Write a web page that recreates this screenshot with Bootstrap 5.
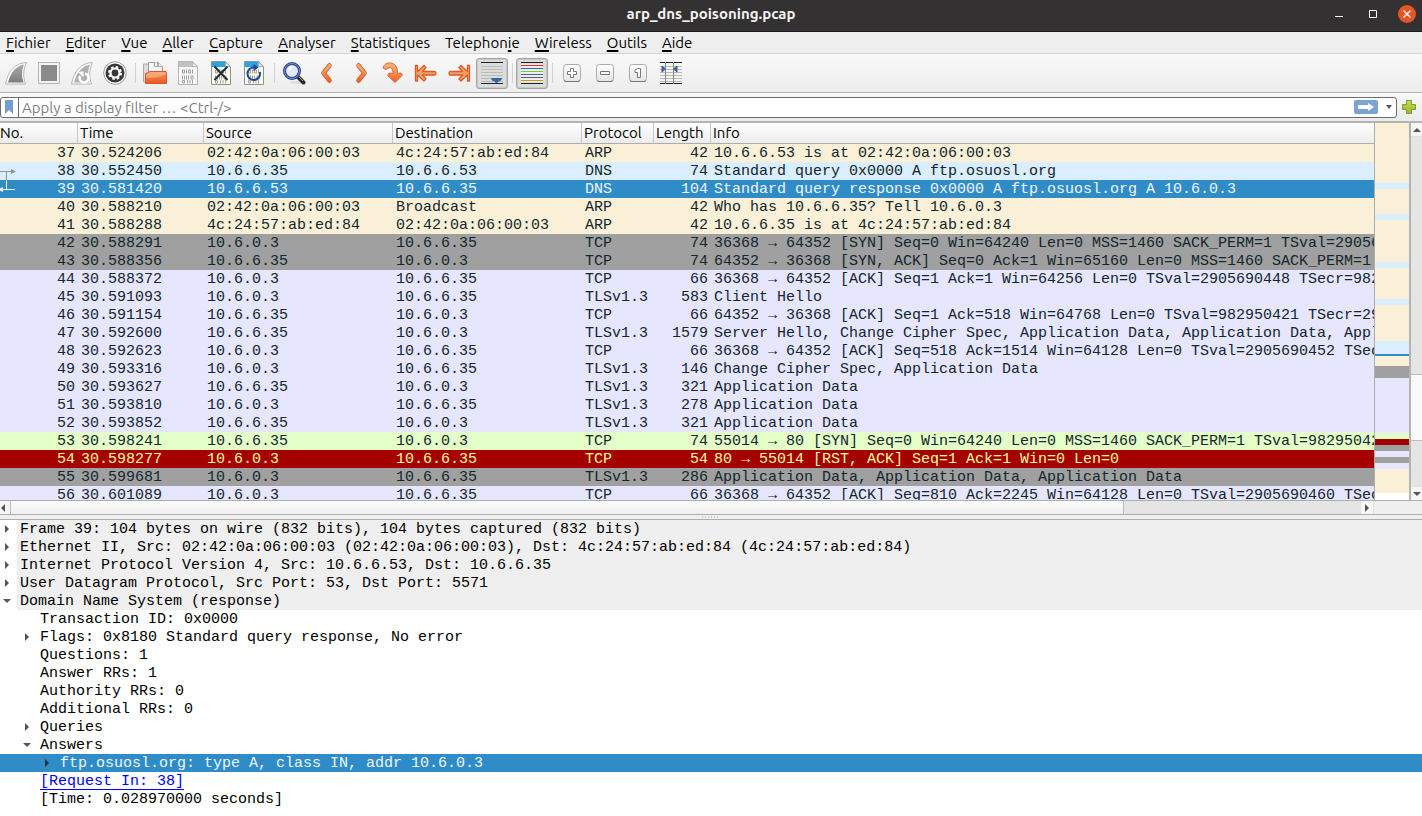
<!DOCTYPE html>
<html lang="fr">
<head>
<meta charset="utf-8">
<meta name="viewport" content="width=device-width, initial-scale=1">
<title>arp_dns_poisoning.pcap</title>
<link href="https://cdn.jsdelivr.net/npm/bootstrap@5.3.0/dist/css/bootstrap.min.css" rel="stylesheet">
<script src="https://cdn.jsdelivr.net/npm/bootstrap@5.3.0/dist/js/bootstrap.bundle.min.js"></script>
<style>
body{font-family:Ubuntu,"Open Sans","Noto Sans",sans-serif;font-size:15px;line-height:20px;color:#000;background:#efefef}
.titlebar{height:32px;background:#333132;border-bottom:1px solid #1c1b1b;color:#fff}
.titlebar h1{font-size:15px;line-height:20px;font-weight:700;color:#f4f3f1}
.winbtns{right:6px;top:0;height:27px;gap:16px}
.winbtns button{width:18px;height:18px}
.plain{border:0;background:none;padding:0;display:flex;align-items:center;justify-content:center}
.menubar{height:22px;border-bottom:1px solid #d4d4d4;padding:0 6px;gap:15px;line-height:22px}
.menubar a{color:#000;text-decoration:none}
.menubar u{text-decoration-thickness:2px;text-underline-offset:2px;text-decoration-skip-ink:none}
.toolbar{height:39px;border-bottom:1px solid #b4b4b4;background:linear-gradient(#f9f9f9,#ededed)}
.tool{width:33px;height:31px;flex:none;padding-right:1px}
.tool.on{background:#dcdcdc;border:1px solid #a5a5a5;border-radius:3px;width:32px;margin-right:1px;padding:0;box-shadow:inset 0 0 0 1px #c8c8c8}
.sep{width:7px;height:20px;flex:none;background:linear-gradient(#d2d2d2,#d2d2d2) 3px 0/1px 100% no-repeat}
.filterbar{height:30px;background:linear-gradient(#f8f8f8,#ebebeb);border-bottom:2px solid #b4b4b4;padding:0 6px 0 0;gap:5px}
.filterbox{height:21px;border:1px solid #6b6b6b;border-radius:3px;background:#fff}
.filterbox .mark-btn{width:18px;border-right:1px solid #6b6b6b;align-self:stretch}
.filterbox input{border:0;outline:0;min-width:0;padding:0 3px;font-size:15px;line-height:19px;height:19px;background:none}
.filterbox input::placeholder{color:#808080;opacity:1}
.packets{flex:392 1 0;min-height:0}
.rows{min-width:0;overflow:hidden;background:#fff}
.ptable{table-layout:fixed;width:100%;border-collapse:separate;border-spacing:0;font-family:"Liberation Mono",monospace;font-size:15px;line-height:16px;color:#12272e}
.ptable th{font:400 15px/20px Ubuntu,"Open Sans","Noto Sans",sans-serif;color:#000;height:21px;padding:0 0 0 2px;background:linear-gradient(#fff,#ececec);border-bottom:1px solid #adadad;border-right:1px solid #c8c8c8}
.ptable th:first-child{padding-left:0}
.ptable th:last-child{border-right:0}
.ptable td{padding:2px 0 0 3px;height:18px;white-space:pre;overflow:hidden}
.ptable td:nth-child(1){position:relative;text-align:right;padding-right:3px;padding-left:0}
.ptable td:nth-child(6){text-align:right;padding-right:3px}
.c1{width:78px}.c2{width:126px}.c3,.c4{width:189px}.c5{width:72px}.c6{width:57px}
.arp{background:#faf0d7}.dns{background:#daeeff}.tcp{background:#e7e6ff}.syn{background:#a0a0a0}.web{background:#e4ffc7}
.rst{background:#a40000;color:#fffc9c}.cur{background:#308cc6;color:#eff6fb}.blank{background:#fff}
.minimap{width:37px;flex:none;border-left:1px solid #adadad;border-right:2px solid #b4b4b4;background:#fff}
.vscroll{width:11px;flex:none;background:#e5e5e5}
.vscroll button,.hscroll button{background:#f6f6f6;flex:none}
.vscroll button{height:14px;overflow:hidden}
.vscroll .thumb{height:67px;background:#fafafa;border:1px solid #bdbdbd;border-width:1px 0}
.hscroll{height:15px;flex:none;border-top:1px solid #adadad;border-bottom:1px solid #adadad;background:#efefef}
.hscroll .track{background:#e5e5e5;margin-right:48px}
.hscroll .thumb{background:linear-gradient(#fcfcfc,#f0f0f0);border:1px solid #bdbdbd;border-width:0 1px}
.split{height:5px;flex:none;border-bottom:1px solid #adadad;color:#999}
.tree-pane{flex:296 1 0;min-height:0;overflow:hidden;background:#fff;font-family:"Liberation Mono",monospace;font-size:15px;line-height:16px}
.tree-pane li{display:flex;height:18px;white-space:pre}
.tree-pane .l1{padding-left:20px}
.tree-pane .l2{padding-left:40px}
.tree-pane .l0 span{flex:1;background:#efefef}
.tree-pane span,.tree-pane a{padding:2px 0 0 3px}
.tree-pane .twist{width:17px;height:18px;flex:none;padding-right:3px}
.tree-pane a{color:#00f;margin-left:20px;padding-left:0;text-decoration:none;border-bottom:1px solid #00f}
</style>
</head>
<body class="d-flex flex-column vh-100 overflow-hidden">
<svg class="position-absolute" width="0" height="0" aria-hidden="true">
<defs>
<linearGradient id="or" x1="0" y1="0" x2="0" y2="24" gradientUnits="userSpaceOnUse"><stop offset="0" stop-color="#f3bd88"/><stop offset=".5" stop-color="#f09050"/><stop offset="1" stop-color="#ec4e1c"/></linearGradient>
<linearGradient id="gy" x1="0" y1="0" x2="0" y2="1"><stop offset="0" stop-color="#aaa"/><stop offset="1" stop-color="#7d7d7d"/></linearGradient>
<linearGradient id="kb" x1="0" y1="0" x2="0" y2="1"><stop offset="0" stop-color="#fff"/><stop offset="1" stop-color="#e4e4e4"/></linearGradient>
<linearGradient id="gn" x1="0" y1="0" x2="0" y2="1"><stop offset="0" stop-color="#c8dc5c"/><stop offset="1" stop-color="#94b824"/></linearGradient>
<symbol id="bits" viewBox="0 0 24 24"><g fill="none" stroke="#a0a0a0" stroke-width="1"><path d="M6.500 9h2v3h-2zM12.500 9h2v3h-2zM10.500 8.500v4M16.500 8.500v4M6.500 14.500v4M8.500 14.500v4M10.500 14.500v4M12.500 14.500v4M15 15h2v3h-2zM6.500 19.500h2v2.500h-2zM11.500 19v3.500M14 19v3.500M16.500 19v3.500"/></g></symbol>
<symbol id="right" viewBox="0 0 8 8"><path d="M2 0v8l4-4z" fill="currentColor"/></symbol>
<symbol id="down" viewBox="0 0 8 8"><path d="M0 2h8L4 6z" fill="currentColor"/></symbol>
</defs>
</svg>

<header class="titlebar position-relative d-flex justify-content-center flex-shrink-0 pt-1">
<h1 class="m-0">arp_dns_poisoning.pcap</h1>
<div class="winbtns position-absolute d-flex align-items-center">
<button class="plain" aria-label="Réduire"><svg width="18" height="18"><path d="M5 11.500h8" stroke="#fff"/></svg></button>
<button class="plain" aria-label="Agrandir"><svg width="18" height="18"><path d="M5.500 5.500h7v7h-7z" fill="none" stroke="#fff"/></svg></button>
<button class="plain" aria-label="Fermer"><svg width="18" height="18"><circle cx="9" cy="9" r="9" fill="#e95420"/><path d="M5.500 5.500l7 7m0-7l-7 7" stroke="#fff" stroke-width="1.500"/></svg></button>
</div>
</header>

<nav class="menubar d-flex flex-shrink-0" aria-label="Menu">
<a href="#"><u>F</u>ichier</a><a href="#"><u>E</u>diter</a><a href="#"><u>V</u>ue</a><a href="#"><u>A</u>ller</a><a href="#"><u>C</u>apture</a><a href="#"><u>A</u>nalyser</a><a href="#"><u>S</u>tatistiques</a><a href="#">Telephon<u>i</u>e</a><a href="#"><u>W</u>ireless</a><a href="#"><u>O</u>utils</a><a href="#"><u>A</u>ide</a>
</nav>

<div class="toolbar d-flex align-items-center flex-shrink-0" role="toolbar" aria-label="Outils">
<button class="tool plain" aria-label="Démarrer"><svg width="24" height="24"><path d="M1.500 23C4 10 11 2 22.500 1.500C19 9 19 16 21.500 23Z" fill="#fff" stroke="#b4b4b4"/><path d="M4 21.500C6.500 11.500 12 5 20 3.500C17.500 10 17.500 16 19.500 21.500Z" fill="url(#gy)"/></svg></button>
<button class="tool plain" aria-label="Arrêter"><svg width="24" height="24"><path d="M1.500 1.500h21v21h-21z" fill="#f4f4f4" stroke="#b4b4b4"/><path d="M4 4h16v16H4z" fill="#8a8a8a"/></svg></button>
<button class="tool plain" aria-label="Redémarrer"><svg width="24" height="24"><path d="M1.500 23C4 10 11 2 22.500 1.500C19 9 19 16 21.500 23Z" fill="#fff" stroke="#b4b4b4"/><path d="M4 21.500C6.500 11.500 12 5 20 3.500C17.500 10 17.500 16 19.500 21.500Z" fill="#b0b0b0"/><path d="M15 12.500a4.500 4.500 0 1 1-5 2.500" fill="none" stroke="#fff" stroke-width="2.500"/><path d="M7.500 10.500h6v6z" fill="#fff"/></svg></button>
<button class="tool plain" aria-label="Options"><svg width="24" height="24"><circle cx="12" cy="12" r="11.300" fill="#fff" stroke="#999"/><circle cx="12" cy="12" r="9.500" fill="#383838"/><circle cx="12" cy="12" r="4.500" fill="none" stroke="#fff" stroke-width="2.200"/><circle cx="12" cy="12" r="6" fill="none" stroke="#fff" stroke-width="2" stroke-dasharray="2.500 2.212"/></svg></button>
<span class="sep"></span>
<button class="tool plain" aria-label="Ouvrir"><svg width="24" height="24"><path d="M.500 3h5v18h-5z" fill="#ddd" stroke="#aaa"/><path d="M5.500 1.500h10l4 4V12h-14z" fill="#fafafa" stroke="#999"/><path d="M11.500 1.500v4h3v-4M15.500 1.500v4h4" fill="#fff" stroke="#aaa"/><path d="M2.500 22.500V12.500l3-1 1-1h16.500l.5 1v11z" fill="url(#or)" stroke="#dd5425"/><path d="M3 17c8 0 14-1 20-4v-2H7l-1 1-3 1z" fill="#f7b48a" opacity=".7"/></svg></button>
<button class="tool plain" aria-label="Enregistrer"><svg width="24" height="24"><path d="M2.500.5h14l5 5v18h-19z" fill="#f8f8f8" stroke="#b4b4b4"/><path d="M3 1h13.500v5H3z" fill="#c2c2c2"/><path d="M16.500 1v4.500h4.500z" fill="#fff" stroke="#b4b4b4"/><use href="#bits"/></svg></button>
<button class="tool plain" aria-label="Fermer le fichier"><svg width="24" height="24"><path d="M2.500.5h14l5 5v18h-19z" fill="#fcfcec" stroke="#8d958d"/><path d="M3 1h13.500l4.500 5H3z" fill="#2ba3e2"/><path d="M16.500 1v4.500h4.500z" fill="#fff" stroke="#9ab"/><use href="#bits"/><path d="M5.500 5.500l13 13.500m0-13.500l-13 13.500" stroke="#222f3a" stroke-width="2"/></svg></button>
<button class="tool plain" aria-label="Recharger"><svg width="24" height="24"><path d="M2.500.5h14l5 5v18h-19z" fill="#fcfcec" stroke="#8d958d"/><path d="M3 1h13.500l4.500 5H3z" fill="#2ba3e2"/><path d="M16.500 1v4.500h4.500z" fill="#fff" stroke="#9ab"/><use href="#bits"/><path d="M17.800 11a6.300 6.300 0 1 1-5.300-4.500" fill="none" stroke="#204a94" stroke-width="2"/><path d="M11.500 3l5 3.500-5 3.500z" fill="#204a94"/></svg></button>
<span class="sep"></span>
<button class="tool plain" aria-label="Rechercher"><svg width="24" height="24"><ellipse cx="15" cy="21.500" rx="7" ry="1.500" fill="#ddd"/><path d="M15.500 15.500l6 6" stroke="#2c2c2c" stroke-width="4" stroke-linecap="round"/><path d="M16 15l5 5" stroke="#999"/><circle cx="10" cy="10" r="7.500" fill="#e4ebf7" stroke="#27408f" stroke-width="3"/><circle cx="10" cy="10" r="7.500" fill="none" stroke="#7d93cf" stroke-width="1"/><path d="M6.500 9c.5-2 2-3 4-3" fill="none" stroke="#fff" stroke-width="2"/></svg></button>
<button class="tool plain" aria-label="Précédent"><svg width="24" height="24"><path d="M14.500 4.500L8.500 12l6 7.500" fill="none" stroke="#d95322" stroke-width="4.500" stroke-linecap="round" stroke-linejoin="round"/><path d="M14.500 4.500L8.500 12l6 7.500" fill="none" stroke="url(#or)" stroke-width="3" stroke-linecap="round" stroke-linejoin="round"/></svg></button>
<button class="tool plain" aria-label="Suivant"><svg width="24" height="24"><path d="M10.500 4.500l6 7.500-6 7.500" fill="none" stroke="#d95322" stroke-width="4.500" stroke-linecap="round" stroke-linejoin="round"/><path d="M10.500 4.500l6 7.500-6 7.500" fill="none" stroke="url(#or)" stroke-width="3" stroke-linecap="round" stroke-linejoin="round"/></svg></button>
<button class="tool plain" aria-label="Aller au paquet"><svg width="24" height="24"><path d="M2 7C3 3 6 1.500 9.500 2C14 2.500 16.500 5.500 16.500 12.500l3.500-.5 1.500 2L14 21.500 6.500 14.500 8 12l4 .5C12 8.500 10.500 6 8 6.500L5 8.500z" fill="url(#or)" stroke="#e06a35" stroke-linejoin="round"/></svg></button>
<button class="tool plain" aria-label="Premier paquet"><svg width="24" height="24"><path d="M1.500 4.500h2v6l6.500-6 2 2-3.500 4H21q2 1.500 0 3.500H8.500l3.500 4-2 2-6.500-6v6h-2z" fill="#f0a265" stroke="#de5a28" stroke-width="1.300" stroke-linejoin="round"/></svg></button>
<button class="tool plain" aria-label="Dernier paquet"><svg width="24" height="24"><path d="M22.500 4.500h-2v6l-6.500-6-2 2 3.500 4H3q-2 1.500 0 3.500h12.500l-3.500 4 2 2 6.500-6v6h2z" fill="#f0a265" stroke="#de5a28" stroke-width="1.300" stroke-linejoin="round"/></svg></button>
<button class="tool plain on" aria-label="Défilement automatique"><svg width="24" height="24"><path d="M1 1.500h22M1 22.500h22" stroke="#1d2528"/><path d="M1 5.500h22M1 8.500h22M1 11.500h22M1 14.500h22M1 17.500h22M1 20.500h22" stroke="#b9bbb6"/><path d="M11 17h11q-.500 3-3.500 3.500L16.500 22.500l-2-2Q11.500 20 11 17z" fill="#3465a4"/></svg></button>
<span class="sep"></span>
<button class="tool plain on" aria-label="Coloriser"><svg width="24" height="24"><path d="M1 1.500h22M1 22.500h22" stroke="#1d2528"/><path d="M1 3h22v18H1z" fill="#eee"/><path d="M1 4.500h22" stroke="#ef2929"/><path d="M1 7.500h22" stroke="#3465a4"/><path d="M1 10.500h22" stroke="#73d216"/><path d="M1 13.500h22" stroke="#3465a4"/><path d="M1 16.500h22" stroke="#75507b"/><path d="M1 19.500h22" stroke="#c4a000"/></svg></button>
<span class="sep"></span>
<button class="tool plain" aria-label="Agrandir le texte"><svg width="24" height="24"><rect x="3.500" y="3.500" width="17" height="17" rx="3" fill="url(#kb)" stroke="#aaa"/><path d="M4 19.500q1 1 2 1h12q1 0 2-1" fill="none" stroke="#777"/><path d="M10.500 7.500h3v3h3v3h-3v3h-3v-3h-3v-3h3z" fill="#fff" stroke="#777"/></svg></button>
<button class="tool plain" aria-label="Réduire le texte"><svg width="24" height="24"><rect x="3.500" y="3.500" width="17" height="17" rx="3" fill="url(#kb)" stroke="#aaa"/><path d="M4 19.500q1 1 2 1h12q1 0 2-1" fill="none" stroke="#777"/><path d="M7.500 10.500h9v3h-9z" fill="#fff" stroke="#777"/></svg></button>
<button class="tool plain" aria-label="Taille normale"><svg width="24" height="24"><rect x="3.500" y="3.500" width="17" height="17" rx="3" fill="url(#kb)" stroke="#aaa"/><path d="M4 19.500q1 1 2 1h12q1 0 2-1" fill="none" stroke="#777"/><path d="M11.500 7.500h3v9h-3v-5h-2.500v-2.500z" fill="#fff" stroke="#777"/></svg></button>
<button class="tool plain" aria-label="Redimensionner les colonnes"><svg width="24" height="24"><path d="M1 1.500h22M1 22.500h22" stroke="#1d2528"/><path d="M1 5.500h22M1 8.500h22M1 11.500h22M1 14.500h22M1 17.500h22M1 20.500h22" stroke="#b9bbb6"/><path d="M6.500 1v22M14.500 1v22" stroke="#888a85"/><path d="M3 5l3.500 3L3 11zM18 5l-3.500 3 3.500 3z" fill="#3465a4" stroke="#3465a4" stroke-linejoin="round"/></svg></button>
</div>

<div class="filterbar d-flex align-items-center flex-shrink-0">
<div class="filterbox d-flex align-items-center flex-grow-1">
<button class="plain mark-btn" aria-label="Signets"><svg width="9" height="14"><path d="M0 0h8v14l-4-4-4 4z" fill="#729fcf"/></svg></button>
<input class="flex-grow-1" type="text" aria-label="Filtre d'affichage" placeholder="Apply a display filter … &lt;Ctrl-/&gt;">
<button class="plain me-2" aria-label="Appliquer"><svg width="24" height="14"><rect width="24" height="14" rx="2" fill="#7ba3d3"/><path d="M4 5h10V3l6 4-6 4V9H4z" fill="#fff"/></svg></button>
<button class="plain me-1" aria-label="Filtres récents"><svg width="6" height="4"><path d="M0 0h6L3 4z" fill="#555"/></svg></button>
</div>
<button class="plain" aria-label="Ajouter un filtre"><svg width="14" height="14"><path d="M4.500.5h5v4h4v5h-4v4h-5v-4h-4v-5h4z" fill="url(#gn)" stroke="#7d9c2c" stroke-linejoin="round"/></svg></button>
</div>

<main class="d-flex flex-column flex-grow-1 overflow-hidden">
<section class="packets d-flex flex-column" aria-label="Paquets">
<div class="d-flex flex-grow-1 overflow-hidden">
<div class="rows flex-grow-1">
<table class="ptable">
<thead><tr><th class="c1">No.</th><th class="c2">Time</th><th class="c3">Source</th><th class="c4">Destination</th><th class="c5">Protocol</th><th class="c6">Length</th><th>Info</th></tr></thead>
<tbody>
<tr class="arp"><td>37</td><td>30.524206</td><td>02:42:0a:06:00:03</td><td>4c:24:57:ab:ed:84</td><td>ARP</td><td>42</td><td>10.6.6.53 is at 02:42:0a:06:00:03</td></tr>
<tr class="dns"><td><svg class="position-absolute top-0 start-0" width="16" height="18"><path d="M0 9.500h12M6.500 9.500v9" fill="none" stroke="#8b979f"/><path d="M11 7l5 2.500-5 2.500z" fill="#8b979f"/></svg>38</td><td>30.552450</td><td>10.6.6.35</td><td>10.6.6.53</td><td>DNS</td><td>74</td><td>Standard query 0x0000 A ftp.osuosl.org</td></tr>
<tr class="cur"><td><svg class="position-absolute top-0 start-0" width="16" height="18"><path d="M0 9.500h15M6.500 0v9.500" fill="none" stroke="#fff"/><path d="M3 7L-2 9.500 3 12z" fill="#fff"/></svg>39</td><td>30.581420</td><td>10.6.6.53</td><td>10.6.6.35</td><td>DNS</td><td>104</td><td>Standard query response 0x0000 A ftp.osuosl.org A 10.6.0.3</td></tr>
<tr class="arp"><td>40</td><td>30.588210</td><td>02:42:0a:06:00:03</td><td>Broadcast</td><td>ARP</td><td>42</td><td>Who has 10.6.6.35? Tell 10.6.0.3</td></tr>
<tr class="arp"><td>41</td><td>30.588288</td><td>4c:24:57:ab:ed:84</td><td>02:42:0a:06:00:03</td><td>ARP</td><td>42</td><td>10.6.6.35 is at 4c:24:57:ab:ed:84</td></tr>
<tr class="syn"><td>42</td><td>30.588291</td><td>10.6.0.3</td><td>10.6.6.35</td><td>TCP</td><td>74</td><td>36368 → 64352 [SYN] Seq=0 Win=64240 Len=0 MSS=1460 SACK_PERM=1 TSval=2905690448</td></tr>
<tr class="syn"><td>43</td><td>30.588356</td><td>10.6.6.35</td><td>10.6.0.3</td><td>TCP</td><td>74</td><td>64352 → 36368 [SYN, ACK] Seq=0 Ack=1 Win=65160 Len=0 MSS=1460 SACK_PERM=1</td></tr>
<tr class="tcp"><td>44</td><td>30.588372</td><td>10.6.0.3</td><td>10.6.6.35</td><td>TCP</td><td>66</td><td>36368 → 64352 [ACK] Seq=1 Ack=1 Win=64256 Len=0 TSval=2905690448 TSecr=982950418</td></tr>
<tr class="tcp"><td>45</td><td>30.591093</td><td>10.6.0.3</td><td>10.6.6.35</td><td>TLSv1.3</td><td>583</td><td>Client Hello</td></tr>
<tr class="tcp"><td>46</td><td>30.591154</td><td>10.6.6.35</td><td>10.6.0.3</td><td>TCP</td><td>66</td><td>64352 → 36368 [ACK] Seq=1 Ack=518 Win=64768 Len=0 TSval=982950421 TSecr=2905690451</td></tr>
<tr class="tcp"><td>47</td><td>30.592600</td><td>10.6.6.35</td><td>10.6.0.3</td><td>TLSv1.3</td><td>1579</td><td>Server Hello, Change Cipher Spec, Application Data, Application Data, Application Data</td></tr>
<tr class="tcp"><td>48</td><td>30.592623</td><td>10.6.0.3</td><td>10.6.6.35</td><td>TCP</td><td>66</td><td>36368 → 64352 [ACK] Seq=518 Ack=1514 Win=64128 Len=0 TSval=2905690452 TSecr=982950422</td></tr>
<tr class="tcp"><td>49</td><td>30.593316</td><td>10.6.0.3</td><td>10.6.6.35</td><td>TLSv1.3</td><td>146</td><td>Change Cipher Spec, Application Data</td></tr>
<tr class="tcp"><td>50</td><td>30.593627</td><td>10.6.6.35</td><td>10.6.0.3</td><td>TLSv1.3</td><td>321</td><td>Application Data</td></tr>
<tr class="tcp"><td>51</td><td>30.593810</td><td>10.6.0.3</td><td>10.6.6.35</td><td>TLSv1.3</td><td>278</td><td>Application Data</td></tr>
<tr class="tcp"><td>52</td><td>30.593852</td><td>10.6.6.35</td><td>10.6.0.3</td><td>TLSv1.3</td><td>321</td><td>Application Data</td></tr>
<tr class="web"><td>53</td><td>30.598241</td><td>10.6.6.35</td><td>10.6.0.3</td><td>TCP</td><td>74</td><td>55014 → 80 [SYN] Seq=0 Win=64240 Len=0 MSS=1460 SACK_PERM=1 TSval=982950428</td></tr>
<tr class="rst"><td>54</td><td>30.598277</td><td>10.6.0.3</td><td>10.6.6.35</td><td>TCP</td><td>54</td><td>80 → 55014 [RST, ACK] Seq=1 Ack=1 Win=0 Len=0</td></tr>
<tr class="syn"><td>55</td><td>30.599681</td><td>10.6.0.3</td><td>10.6.6.35</td><td>TLSv1.3</td><td>286</td><td>Application Data, Application Data, Application Data</td></tr>
<tr class="tcp"><td>56</td><td>30.601089</td><td>10.6.0.3</td><td>10.6.6.35</td><td>TCP</td><td>66</td><td>36368 → 64352 [ACK] Seq=810 Ack=2245 Win=64128 Len=0 TSval=2905690460 TSecr=982950430</td></tr>
</tbody>
</table>
</div>
<div class="minimap d-flex flex-column" aria-hidden="true">
<div class="arp" style="flex:60"></div><div class="dns" style="flex:6"></div><div class="arp" style="flex:25"></div><div class="dns" style="flex:6"></div><div class="arp" style="flex:42"></div><div class="dns" style="flex:6"></div><div class="arp" style="flex:31"></div><div class="dns" style="flex:6"></div><div class="arp" style="flex:36"></div><div class="dns" style="flex:13"></div><div class="cur" style="flex:2"></div><div class="arp" style="flex:10"></div><div class="syn" style="flex:12"></div><div class="tcp" style="flex:55"></div><div class="web" style="flex:6"></div><div class="rst" style="flex:6"></div><div class="syn" style="flex:6"></div><div class="tcp" style="flex:6"></div><div class="syn" style="flex:6"></div><div class="tcp" style="flex:6"></div><div class="arp" style="flex:24"></div><div class="blank" style="flex:7"></div>
</div>
<div class="vscroll d-flex flex-column">
<button class="plain border-bottom" aria-label="Monter"><svg width="8" height="4"><path d="M0 4h8L4 0z" fill="#555"/></svg></button>
<div style="flex:238"></div><div class="thumb"></div><div style="flex:45"></div>
<button class="plain border-top" aria-label="Descendre"><svg width="8" height="4"><path d="M0 0h8L4 4z" fill="#555"/></svg></button>
</div>
</div>
<div class="hscroll d-flex">
<button class="plain pe-1" aria-label="Gauche"><svg width="6" height="8"><path d="M5 0v8L1 4z" fill="#555"/></svg></button>
<div class="track d-flex flex-grow-1"><div class="thumb me-auto" style="width:81.7%"></div>
<button class="plain border-start border-end px-1" aria-label="Droite"><svg width="4" height="8"><path d="M0 0v8l4-4z" fill="#555"/></svg></button></div>
</div>
</section>
<div class="split d-flex justify-content-center align-items-center" role="separator"><svg width="20" height="2"><path d="M1 1h18" stroke="#aaa" stroke-dasharray="1 2"/></svg></div>
<section class="tree-pane" aria-label="Détails du paquet">
<ul class="list-unstyled m-0">
<li class="l0"><button class="plain twist" aria-label="Développer"><svg width="8" height="8" color="#555"><use href="#right"/></svg></button><span>Frame 39: 104 bytes on wire (832 bits), 104 bytes captured (832 bits)</span></li>
<li class="l0"><button class="plain twist" aria-label="Développer"><svg width="8" height="8" color="#555"><use href="#right"/></svg></button><span>Ethernet II, Src: 02:42:0a:06:00:03 (02:42:0a:06:00:03), Dst: 4c:24:57:ab:ed:84 (4c:24:57:ab:ed:84)</span></li>
<li class="l0"><button class="plain twist" aria-label="Développer"><svg width="8" height="8" color="#555"><use href="#right"/></svg></button><span>Internet Protocol Version 4, Src: 10.6.6.53, Dst: 10.6.6.35</span></li>
<li class="l0"><button class="plain twist" aria-label="Développer"><svg width="8" height="8" color="#555"><use href="#right"/></svg></button><span>User Datagram Protocol, Src Port: 53, Dst Port: 5571</span></li>
<li class="l0"><button class="plain twist" aria-label="Réduire"><svg width="8" height="8" color="#555"><use href="#down"/></svg></button><span>Domain Name System (response)</span></li>
<li class="l1"><i class="twist"></i><span>Transaction ID: 0x0000</span></li>
<li class="l1"><button class="plain twist" aria-label="Développer"><svg width="8" height="8" color="#555"><use href="#right"/></svg></button><span>Flags: 0x8180 Standard query response, No error</span></li>
<li class="l1"><i class="twist"></i><span>Questions: 1</span></li>
<li class="l1"><i class="twist"></i><span>Answer RRs: 1</span></li>
<li class="l1"><i class="twist"></i><span>Authority RRs: 0</span></li>
<li class="l1"><i class="twist"></i><span>Additional RRs: 0</span></li>
<li class="l1"><button class="plain twist" aria-label="Développer"><svg width="8" height="8" color="#555"><use href="#right"/></svg></button><span>Queries</span></li>
<li class="l1"><button class="plain twist" aria-label="Réduire"><svg width="8" height="8" color="#555"><use href="#down"/></svg></button><span>Answers</span></li>
<li class="l2 cur"><button class="plain twist" aria-label="Développer"><svg width="8" height="8" color="#12303f"><use href="#right"/></svg></button><span>ftp.osuosl.org: type A, class IN, addr 10.6.0.3</span></li>
<li class="l1"><a href="#">[Request In: 38]</a></li>
<li class="l1"><i class="twist"></i><span>[Time: 0.028970000 seconds]</span></li>
</ul>
</section>
</main>
</body>
</html>
